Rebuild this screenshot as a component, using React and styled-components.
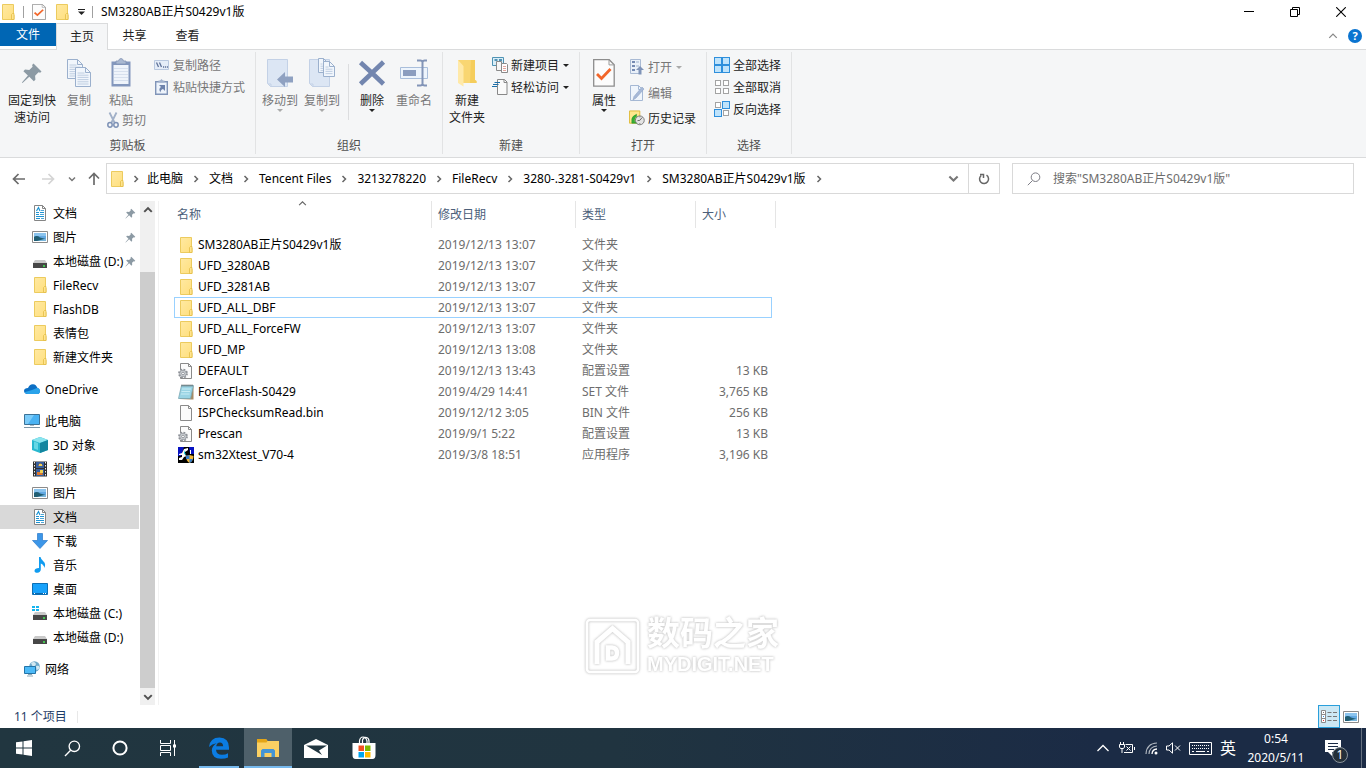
import React from "react";
import styled, { createGlobalStyle, css } from "styled-components";

const GlobalStyle = createGlobalStyle`
  *, *::before, *::after { box-sizing: border-box; }
  html, body { margin: 0; padding: 0; }
  body {
    background: #fff;
    color: #000;
    font-family: "Noto Sans", "Noto Sans CJK SC", sans-serif;
    font-size: 12px;
    line-height: 17px;
    overflow: hidden;
  }
  button, input {
    font: inherit;
    color: inherit;
    margin: 0;
    padding: 0;
    border: 0;
    background: transparent;
  }
  svg { display: block; flex: none; }
`;

/* ---------- drawings ---------- */

const Folder = () => (
  <svg width="16" height="16" viewBox="0 0 16 16">
    <defs>
      <linearGradient id="fold" x1="0" y1="0" x2="1" y2="1">
        <stop offset="0" stopColor="#ffe9a2" />
        <stop offset="1" stopColor="#ffdf7d" />
      </linearGradient>
    </defs>
    <path d="M2.5.5h11v10.500l.5.5v4h-11.500z" fill="url(#fold)" stroke="#eccb5e" />
    <path d="M11.500 15.500v-5l1-1h1.500v6z" fill="#ffe48f" stroke="#e3bd45" strokeWidth=".8" />
  </svg>
);

const CheckDoc = ({ w = 14, h = 16 }) => (
  <svg width={w} height={h} viewBox="0 0 22 28" preserveAspectRatio="none">
    <path d="M.7.7h15.500l5 5v21.500H.7z" fill="#fcfcfc" stroke="#8d8d8d" strokeWidth="1.300" />
    <path d="M16 .7v5.200h5.200" fill="none" stroke="#9a9a9a" />
    <path d="M4 15l4.500 4.500L17.500 10" fill="none" stroke="#f2662a" strokeWidth="2.800" />
  </svg>
);

const Down = ({ color = "#222" }) => (
  <svg width="6" height="3" viewBox="0 0 6 3"><path d="M0 0h6L3 3z" fill={color} /></svg>
);

const Chevron = ({ dir = "down", color = "#666", size = 8, weight = 1.5 }) => {
  const d = {
    down: "M1 2.500l3 3 3-3",
    up: "M1 5.500l3-3 3 3",
    right: "M2.500 1l3 3-3 3",
  }[dir];
  return (
    <svg width={size} height={size} viewBox="0 0 8 8">
      <path d={d} fill="none" stroke={color} strokeWidth={weight} />
    </svg>
  );
};

const Pin = ({ size = 22 }) => (
  <svg width={size} height={size} viewBox="0 0 22 22">
    <path d="M12.500 1.500l8 8-1.300 1.300-1.700-.5-3.400 3.400.3 4-1.600 1.600-4.500-4.600L1.500 21 .9 20.400l6-6.900-4.500-4.300L4 7.600l4.300.4L11.600 4.700l-.5-1.800z" fill="#8c9aa4" />
  </svg>
);

const Page = ({ x, y, w, h, lines = 6 }) => (
  <g>
    <path d={`M${x} ${y}h${w - 5}l5 5v${h - 5}h-${w}z`} fill="#f1f6fc" stroke="#9bb0cd" />
    <path d={`M${x + w - 5} ${y}v5h5`} fill="none" stroke="#9bb0cd" />
    {Array.from({ length: lines }, (_, i) => (
      <path key={i} d={`M${x + 2} ${y + 5.5 + i * 2.2}h${w - (i < 1 ? 8 : 4)}`} stroke="#b9c8de" strokeWidth=".9" />
    ))}
  </g>
);

const CopyPages = () => (
  <svg width="26" height="30" viewBox="0 0 26 30">
    <Page x={1.5} y={1.5} w={15} h={19} />
    <Page x={9.5} y={9.5} w={15} h={19} />
  </svg>
);

const Clipboard = () => (
  <svg width="20" height="30" viewBox="0 0 20 30">
    <path d="M.5 3.500h19v25h-19z" fill="#8397bd" />
    <path d="M2.500 7h15v19h-15z" fill="#eff4fb" />
    <path d="M5 5V3h2.500Q8 .5 10 .5T12.500 3H15v3H5z" fill="#aab9d2" stroke="#8193b4" strokeWidth=".8" />
    <path d="M3 10.500h14M3 13.500h14M3 16.500h14M3 19.500h14M3 22.500h14" stroke="#d7e0ee" />
  </svg>
);

const Scissors = () => (
  <svg width="12" height="16" viewBox="0 0 12 16" fill="none">
    <path d="M2.500 0.500l5 10M9.500 .5l-5 10" stroke="#a1b0c8" strokeWidth="1.800" />
    <ellipse cx="3" cy="12.800" rx="2.200" ry="2.400" stroke="#7e92b6" strokeWidth="1.500" />
    <ellipse cx="9" cy="12.800" rx="2.200" ry="2.400" stroke="#7e92b6" strokeWidth="1.500" />
  </svg>
);

const PathIcon = () => (
  <svg width="16" height="16" viewBox="0 0 16 16">
    <path d="M.5 3.500h14v9H.5z" fill="#e5edf8" stroke="#b9c8df" />
    <path d="M2.500 5.500l2 4.500M5.500 5.500l2 4.500" stroke="#5f7299" strokeWidth="1.300" />
    <path d="M9 10h1.200M11 10h1.200M13 10h1" stroke="#5f7299" strokeWidth="1.300" />
  </svg>
);

const ShortcutIcon = () => (
  <svg width="16" height="16" viewBox="0 0 16 16">
    <path d="M1.700 2.700h11.600v12.600H1.700z" fill="#edf3fb" stroke="#8094b8" strokeWidth="1.400" />
    <path d="M4.500 3.500v-2h1.500L7.500 0 9 1.500h1.500v2z" fill="#a3b3ce" />
    <path d="M5 6h6v6L9 10q-2.500.5-2.500 3.500-2.500-3.500.5-5.500z" fill="#6e83ac" />
  </svg>
);

const BookBase = () => (
  <path d="M1.500 1.500h20v27H4.500l-3-3z" fill="#dce6f4" stroke="#c3d1e6" />
);

const MoveTo = () => (
  <svg width="28" height="30" viewBox="0 0 28 30">
    <BookBase />
    <path d="M2 26h3v3" fill="none" stroke="#c3d1e6" />
    <path d="M11 21.500l8-7.500v4.500h8v6h-8V29z" fill="#8fa1c1" />
  </svg>
);

const CopyTo = () => (
  <svg width="28" height="30" viewBox="0 0 28 30">
    <BookBase />
    <path d="M2 26h3v3" fill="none" stroke="#c3d1e6" />
    <Page x={10.5} y={.5} w={10} h={14} lines={4} />
    <Page x={15.5} y={3.5} w={11} h={15} lines={4} />
  </svg>
);

const DeleteX = () => (
  <svg width="28" height="28" viewBox="0 0 28 28">
    <path d="M2.500 3.500L14 14 25.500 25M25.500 3L14 14 2.500 25" fill="none" stroke="#7386af" strokeWidth="4.600" />
  </svg>
);

const Rename = () => (
  <svg width="30" height="30" viewBox="0 0 30 30">
    <path d="M1.500 9.500h27v11h-27z" fill="#edf4fc" stroke="#a9bedb" />
    <path d="M4 12h13v6H4z" fill="#8b9dbf" />
    <path d="M18 2.500h3.500q1.500 0 2 1.500v22q-.5 1.500-2 1.500H18M28 2.500h-2.500q-1.500 0-2 1.500v22q.5 1.500 2 1.500H28" fill="none" stroke="#8294b7" strokeWidth="2" />
  </svg>
);

const BigFolder = () => (
  <svg width="20" height="28" viewBox="0 0 20 28">
    <path d="M1 1h17v20l1.500 1v2H6z" fill="#f9d672" />
    <path d="M1 1l5.500 6v20.500L1 24z" fill="#ffe9a8" />
    <path d="M14 1h4v20l1.500 1v2H13z" fill="#f5cd5c" />
  </svg>
);

const NewItem = () => (
  <svg width="16" height="16" viewBox="0 0 16 16">
    <path d="M.5.500h11v8H.500z" fill="#d9eef8" stroke="#4f93b4" />
    <path d="M2.500 3h3M7 3h3" stroke="#25759f" strokeWidth="1.500" />
    <path d="M4.500 4.500h5v9h-5z" fill="#f7f7f7" stroke="#8a8a8a" />
    <path d="M9.500 6.500h5l1 1v8h-6z" fill="#fff" stroke="#8a8a8a" />
    <path d="M11 9.500h3M11 11.500h3M11 13.500h3" stroke="#e19b93" strokeWidth=".9" />
  </svg>
);

const EasyAccess = () => (
  <svg width="16" height="16" viewBox="0 0 16 16">
    <path d="M5.500 .500h7l2.500 2.500v12.500H5.500z" fill="#fafafa" stroke="#888" />
    <path d="M12 .500v3h3" fill="none" stroke="#888" />
    <path d="M2.500 3.500H8M1 5.500h5.500M0 7.500h5" stroke="#1d6fa8" strokeWidth="1.200" />
  </svg>
);

const OpenIcon = () => (
  <svg width="16" height="16" viewBox="0 0 16 16">
    <path d="M1.500 .500h10v14h-10z" fill="#e9f0f9" stroke="#a9bad4" />
    <path d="M3 3h3M3 7h3M3 11h3" stroke="#7389b2" strokeWidth="2" />
    <path d="M7 3h3M7 7h3" stroke="#b7c6dd" strokeWidth="1.500" />
    <path d="M11 7l4 4h-2.500v4.500h-3V11H7z" fill="#7f93b8" />
  </svg>
);

const EditIcon = () => (
  <svg width="16" height="16" viewBox="0 0 16 16">
    <path d="M1.500 .500h8l4 4v11h-12z" fill="#eff5fc" stroke="#a5b8d4" />
    <path d="M9.500 .500v4h4" fill="none" stroke="#a5b8d4" />
    <path d="M4 15l1-3.500 8-9.500 2 2-8 9z" fill="#a6b9d8" stroke="#8fa3c4" strokeWidth=".6" />
  </svg>
);

const HistoryIcon = () => (
  <svg width="16" height="16" viewBox="0 0 17 16">
    <path d="M.5.500h11v13H.500z" fill="#ffe88d" stroke="#dfba37" />
    <circle cx="11.500" cy="10.500" r="4.700" fill="#e4e4e4" stroke="#777" />
    <path d="M11.500 10.500l2.500-3M11.500 10.500l-2.500.3M11.500 13.500v.8M11.500 6.500v.8" stroke="#555" strokeWidth=".9" />
    <path d="M8 4v2.500Q5.500 8 6 12l2 1.500H3V9q.5-3 5-5z" fill="#35b034" stroke="#1f8c28" strokeWidth=".5" />
  </svg>
);

const selectBoxes = [[0.5, 0.5], [8.5, 0.5], [0.5, 8.5], [8.5, 8.5]];
const SelectIcon = ({ on }) => (
  <svg width="16" height="16" viewBox="0 0 16 16">
    {selectBoxes.map(([x, y], i) =>
      on.includes(i) ? (
        <rect key={i} x={x} y={y} width="7" height="7" fill="#bfe3fb" stroke="#2e8fdc" />
      ) : (
        <rect key={i} x={x + 1} y={y + 1} width="5" height="5" fill="#fff" stroke="#a3a3a3" />
      )
    )}
  </svg>
);

const DocIcon = () => (
  <svg width="16" height="16" viewBox="0 0 16 16">
    <path d="M2.500 .500h8l3 3v12h-11z" fill="#fff" stroke="#858585" />
    <path d="M10.500 .500v3h3" fill="none" stroke="#858585" />
    <path d="M4.500 6L6.500 2.500 8 6M4 7.500h3M8 7.500h4M4 9.500h3M4 11.500h8M4 13.500h4" fill="none" stroke="#1f94d2" strokeWidth="1.200" />
    <path d="M9 5.500h3M8 9.500h4M9 13.500h3" stroke="#4fa6d6" strokeWidth="1.200" />
  </svg>
);

const PictureIcon = () => (
  <svg width="16" height="16" viewBox="0 0 16 16">
    <path d="M.500 2.500h15v11H.500z" fill="#fff" stroke="#8b8b8b" />
    <path d="M2 4h12v8H2z" fill="#63a9e3" />
    <path d="M2 4h12v3H2z" fill="#8bc4ee" />
    <path d="M2 8q3-2 6 .5l6 1.500v2H2z" fill="#215e73" />
    <path d="M5 12l9-2.500V12z" fill="#79b6dc" />
  </svg>
);

const DriveIcon = ({ windows }) => (
  <svg width="16" height="16" viewBox="0 0 16 16">
    {windows && <path d="M0 1h3v2H0zM4 1h3v2H4zM0 4h3v2H0zM4 4h3v2H4z" fill="#16b5ef" />}
    <path d="M3 7h10l2 3H1z" fill="#c9c9c9" />
    <path d="M1 10h14v5H1z" fill="#474747" />
    <path d="M11 13h2" stroke="#42ec53" strokeWidth="1.300" />
  </svg>
);

const OneDrive = () => (
  <svg width="16" height="16" viewBox="0 0 16 16">
    <path d="M4 7Q5.500 3 9 3.200q3.300.3 4.300 3.600Q16 7.500 16 10.200 15.800 13 13 13H3.500Q0 12.800 0 9.700 .3 7 4 7z" fill="#0d6fc4" />
    <path d="M8 9l5.500-2.200Q16 7.500 16 10.200 15.800 13 13 13H3.500q-2 0-3-1.800z" fill="#2aa3ea" />
  </svg>
);

const ComputerIcon = () => (
  <svg width="16" height="16" viewBox="0 0 16 16">
    <path d="M.500 1.500h15v10H.500z" fill="#49b2f3" stroke="#3b7297" />
    <path d="M1 2h9L4 11H1z" fill="#7bcbf9" />
    <path d="M6 12h4v1H6z" fill="#a9bac5" /><path d="M0 14.500h16" stroke="#7d96a7" />
  </svg>
);

const CubeIcon = () => (
  <svg width="16" height="16" viewBox="0 0 16 16">
    <path d="M8 0l8 3v10l-8 3-8-3V3z" fill="#29b8cf" />
    <path d="M8 0l8 3-8 3-8-3z" fill="#8be4ee" /><path d="M8 6l8-3v10l-8 3z" fill="#13859f" />
    <path d="M2 4.500l4 1.500v7L2 11.500z" fill="#66d7e5" />
  </svg>
);

const VideoIcon = () => (
  <svg width="16" height="16" viewBox="0 0 16 16">
    <path d="M1 .500h14v15H1z" fill="#303030" />
    <path d="M2.500 1v15M13.500 1v15" stroke="#eee" strokeDasharray="1.500 1.500" />
    <path d="M4 1h8v6H4zM4 8h8v7H4z" fill="#385f9d" />
    <path d="M6 5l2-3 3 3zM5 11h5l1 3H5z" fill="#e0792c" /><path d="M7 3h3v2H7zM8 9h3v3H8z" fill="#edd257" />
  </svg>
);

const DownloadIcon = () => (
  <svg width="16" height="16" viewBox="0 0 16 16">
    <path d="M5.500.5h5v7h5L8 15.500.5 7.500h5z" fill="#3c96e8" stroke="#2a79c8" strokeWidth=".7" />
  </svg>
);

const MusicIcon = () => (
  <svg width="16" height="16" viewBox="0 0 16 16">
    <path d="M7 0h1.500q.5 2.500 3 4.500 2.800 2.500.8 6.500-.2-3-3.500-4.500v6q-.2 3-3.500 3.300-2.800 0-2.800-2 .4-2.700 4.500-2.700z" fill="#109cf0" />
  </svg>
);

const DesktopIcon = () => (
  <svg width="16" height="16" viewBox="0 0 16 16">
    <path d="M.500 2.500h15v11H.500z" fill="#18a2fb" stroke="#0c6fb5" />
    <path d="M1 12.500h14" stroke="#0b68ab" /><path d="M2 12.500h1M11 12.500h1M13 12.500h1" stroke="#fff" />
  </svg>
);

const NetworkIcon = () => (
  <svg width="16" height="16" viewBox="0 0 16 16">
    <circle cx="10.500" cy="5.500" r="5.300" fill="#6fa9c9" />
    <path d="M7 2q3-2 4.500 0T9 6zM12 5q3-1 3.500 1T12.500 9z" fill="#d3e8f1" />
    <path d="M.500 5.500h11v7H.500z" fill="#4dbaf7" stroke="#2374a8" />
    <path d="M4 13.500h4M3 15h6" stroke="#8faab8" />
  </svg>
);

const BlankFile = () => (
  <svg width="16" height="16" viewBox="0 0 16 16">
    <path d="M2.500 .500h8l3 3v12h-11z" fill="#fbfbfb" stroke="#8a8a8a" />
    <path d="M10.500 .500v3h3" fill="none" stroke="#8a8a8a" />
  </svg>
);

const GearFile = () => (
  <svg width="16" height="16" viewBox="0 0 16 16">
    <path d="M3 .500h7.500l3 3v12H2.500V.500z" fill="#fbfbfb" stroke="#8a8a8a" />
    <path d="M10.500 .500v3h3" fill="none" stroke="#8a8a8a" />
    <circle cx="5" cy="10.500" r="4" fill="#e1e3e6" stroke="#8d9197" strokeWidth="1.800" strokeDasharray="1.800 1.340" />
    <circle cx="5" cy="10.500" r="3.200" fill="#d4d8dc" stroke="#8d9197" strokeWidth=".7" />
    <circle cx="5" cy="10.500" r="1.400" fill="#fff" stroke="#8d9197" />
  </svg>
);

const NotepadFile = () => (
  <svg width="16" height="16" viewBox="0 0 16 16">
    <path d="M4 2h11.500v13.500H13L1.500 15z" fill="#a58c66" />
    <path d="M3.500 1.500h12L12.500 14.500H.500z" fill="#9ad4e4" stroke="#7aa7b4" strokeWidth=".8" />
    <path d="M4 5h9M3.500 7.500H12M3 10h8.500" stroke="#c8ecf4" />
    <path d="M4 .500v2M6 .500v2M8 .500v2M10 .500v2M12 .500v2M14 .500v2" stroke="#555" strokeWidth=".9" />
  </svg>
);

const AppFile = () => (
  <svg width="16" height="16" viewBox="0 0 16 16">
    <path d="M0 0h16v16H0z" fill="#000" /><path d="M0 0h6L3 9H0zM11 0h5v7h-4z" fill="#0712c2" />
    <path d="M6 2l4-1v2L7 5v3l2 1-3 1-2 3H1v-2l3-1V8H1V7l3-1z" fill="#fff" />
    <path d="M12 3h1v4h-1z" fill="#fff" />
    <path d="M6 3l2 5-2-1z" fill="#2bd2dd" />
    <path d="M8 9l3.500-1L15.500 9q0 5-4 7-3.500-2-3.500-7z" fill="#f3b736" />
    <path d="M11.500 8v4H8Q7.800 10.500 8 9zM11.500 12h3.500q-1 3-3.500 4z" fill="#377ec7" />
  </svg>
);

const Magnifier = ({ size = 14, color = "#7d7d85", width = 1 }) => (
  <svg width={size} height={size} viewBox="0 0 14 14">
    <circle cx="8.500" cy="5.200" r="4.300" fill="none" stroke={color} strokeWidth={width} />
    <path d="M5.500 8.500L.800 13.200" stroke={color} strokeWidth={width} />
  </svg>
);

const NavArrow = ({ dir = 0, color = "#6b6b6b" }) => (
  <svg width="14" height="14" viewBox="0 0 14 14">
    <path transform={`rotate(${dir} 7 7)`} d="M13 7H1.500M6.500 2l-5 5 5 5" fill="none" stroke={color} strokeWidth="1.700" />
  </svg>
);

/* ---------- window chrome ---------- */

const Screen = styled.div`
  display: flex;
  flex-direction: column;
  height: 100vh;
`;

const TitleBar = styled.header`
  display: flex;
  align-items: center;
  height: 23px;
`;

const QuickTools = styled.div`
  display: flex;
  align-items: center;
  gap: 7px;
  margin-right: 8px;
`;

const Rule = styled.span`
  width: 1px;
  height: 12px;
  background: #a0a0a0;
`;

const IconButton = styled.button`
  display: flex;
  align-items: center;
  justify-content: center;
  width: ${(p) => p.$w || 16}px;
  height: ${(p) => p.$h || 16}px;
  flex: none;
`;

const Title = styled.h1`
  flex: 1;
  margin: 0;
  font-size: 12px;
  font-weight: 400;
`;

const WindowButtons = styled.div`
  display: flex;
  padding-right: 2px;
`;

const TabBar = styled.nav`
  display: flex;
  align-items: flex-start;
  height: 27px;
  border-bottom: 1px solid #dadbdc;
`;

const Tab = styled.button`
  width: 53px;
  height: 25px;
  color: #222;
  ${(p) => p.$kind === "file" && css`
    width: 56px;
    height: 23px;
    background: #0066b4;
    color: #fff;
  `}
  ${(p) => p.$kind === "active" && css`
    width: 52px;
    height: 27px;
    padding-bottom: 2px;
    background: #f5f6f7;
    border: 1px solid #dadbdc;
    border-bottom: 0;
  `}
`;

const TabTools = styled.div`
  display: flex;
  align-items: center;
  gap: 10px;
  height: 26px;
  margin-left: auto;
  padding-right: 4px;
`;

const HelpButton = styled.button`
  width: 14px;
  height: 14px;
  border-radius: 50%;
  background: #0a74d0;
  color: #fff;
  font-weight: 700;
  font-size: 11px;
  line-height: 14px;
`;

/* ---------- ribbon ---------- */

const RibbonBar = styled.section`
  display: flex;
  height: 108px;
  background: #f5f6f7;
  border-bottom: 1px solid #dadbdc;
`;

const Group = styled.div`
  display: flex;
  flex-direction: column;
  width: ${(p) => p.$w}px;
  margin: 2px 0 3px;
  padding-top: 2px;
  border-right: 1px solid #e2e3e4;
`;

const GroupBody = styled.div`
  display: flex;
  flex: 1;
  padding-left: ${(p) => p.$pad || 0}px;
`;

const GroupName = styled.div`
  height: 17px;
  color: #505050;
  text-align: center;
`;

const Stack = styled.div`
  display: flex;
  flex-direction: column;
  width: ${(p) => (p.$w ? `${p.$w}px` : "auto")};
  padding-left: ${(p) => p.$pad || 0}px;
`;

const LargeButton = styled.button`
  display: flex;
  flex-direction: column;
  align-items: center;
  width: ${(p) => p.$w || 42}px;
  margin-top: 3px;
  align-self: flex-start;
  color: ${(p) => (p.$off ? "#777" : "#222")};
  white-space: pre-line;
`;

const LargeIcon = styled.span`
  display: flex;
  align-items: center;
  height: 32px;
  margin-bottom: 3px;
`;

const SmallButton = styled.button`
  display: flex;
  align-items: center;
  gap: 3px;
  height: ${(p) => p.$h || 22}px;
  color: ${(p) => (p.$off ? "#777" : "#222")};
  white-space: nowrap;

  & > svg:last-child:not(:first-child) { margin-left: 1px; }
`;

const ButtonRule = styled.span`
  width: 1px;
  height: 56px;
  margin: 10px 2px 0 5px;
  background: #dcdddf;
`;

const Large = ({ icon, label, off, w, menu }) => (
  <LargeButton $off={off} $w={w}>
    <LargeIcon>{icon}</LargeIcon>
    {label}
    {menu && <Down color={off ? "#aaa" : "#222"} />}
  </LargeButton>
);

const Small = ({ icon, label, off, h, menu }) => (
  <SmallButton $off={off} $h={h}>
    {icon}
    <span>{label}</span>
    {menu && <Down color={off ? "#aaa" : "#222"} />}
  </SmallButton>
);

const Ribbon = () => (
  <RibbonBar>
    <Group $w={256}>
      <GroupBody>
        <Large icon={<Pin />} label={"固定到快\n速访问"} w={64} />
        <Large icon={<CopyPages />} label="复制" off w={30} />
        <Stack $w={56}>
          <Large icon={<Clipboard />} label="粘贴" off w={54} />
          <Stack $pad={13}><Small icon={<Scissors />} label="剪切" off /></Stack>
        </Stack>
        <Stack $pad={4}>
          <Small icon={<PathIcon />} label="复制路径" off />
          <Small icon={<ShortcutIcon />} label="粘贴快捷方式" off />
        </Stack>
      </GroupBody>
      <GroupName>剪贴板</GroupName>
    </Group>
    <Group $w={187}>
      <GroupBody $pad={3}>
        <Large icon={<MoveTo />} label="移动到" off menu />
        <Large icon={<CopyTo />} label="复制到" off menu />
        <ButtonRule />
        <Large icon={<DeleteX />} label="删除" menu />
        <Large icon={<Rename />} label="重命名" off />
      </GroupBody>
      <GroupName>组织</GroupName>
    </Group>
    <Group $w={137}>
      <GroupBody $pad={3}>
        <Large icon={<BigFolder />} label={"新建\n文件夹"} />
        <Stack $pad={4}>
          <Small icon={<NewItem />} label="新建项目" menu />
          <Small icon={<EasyAccess />} label="轻松访问" menu />
        </Stack>
      </GroupBody>
      <GroupName>新建</GroupName>
    </Group>
    <Group $w={127}>
      <GroupBody $pad={3}>
        <Large icon={<CheckDoc w={22} h={28} />} label="属性" menu />
        <Stack $pad={4}>
          <Small icon={<OpenIcon />} label="打开" off menu h={26} />
          <Small icon={<EditIcon />} label="编辑" off h={26} />
          <Small icon={<HistoryIcon />} label="历史记录" h={24} />
        </Stack>
      </GroupBody>
      <GroupName>打开</GroupName>
    </Group>
    <Group $w={85}>
      <GroupBody $pad={7}>
        <Stack>
          <Small icon={<SelectIcon on={[0, 1, 2, 3]} />} label="全部选择" />
          <Small icon={<SelectIcon on={[]} />} label="全部取消" />
          <Small icon={<SelectIcon on={[1, 2]} />} label="反向选择" />
        </Stack>
      </GroupBody>
      <GroupName>选择</GroupName>
    </Group>
  </RibbonBar>
);

/* ---------- address bar ---------- */

const AddressRow = styled.div`
  display: flex;
  align-items: center;
  height: 43px;
  padding: 0 12px 2px 4px;
`;

const AddressBox = styled.div`
  display: flex;
  align-items: center;
  flex: 1;
  height: 31px;
  margin-right: 12px;
  padding-left: 2px;
  border: 1px solid #d9d9d9;
`;

const Crumb = styled.button`
  white-space: nowrap;
`;

const CrumbArrow = styled.span`
  display: flex;
  justify-content: center;
  width: ${(p) => (p.$first ? 22 : 26)}px;
`;

const AddressTools = styled.div`
  display: flex;
  align-items: center;
  height: 100%;
  margin-left: auto;

  & > button:last-child { border-left: 1px solid #d9d9d9; }
`;

const SearchBox = styled.label`
  display: flex;
  align-items: center;
  gap: 12px;
  flex: 0 1 342px;
  height: 31px;
  padding-left: 14px;
  border: 1px solid #d9d9d9;
`;

const SearchInput = styled.input`
  flex: 1;
  min-width: 0;
  outline: 0;
  &::placeholder { color: #6d6d6d; opacity: 1; }
`;

const crumbs = ["此电脑", "文档", "Tencent Files", "3213278220", "FileRecv", "3280-.3281-S0429v1", "SM3280AB正片S0429v1版"];

const AddressBar = () => (
  <AddressRow>
    <IconButton $w={30} aria-label="后退"><NavArrow /></IconButton>
    <IconButton $w={28} aria-label="前进"><NavArrow dir={180} color="#d4d4d4" /></IconButton>
    <IconButton $w={20} aria-label="最近位置"><Chevron color="#777" /></IconButton>
    <IconButton $w={24} aria-label="上移"><NavArrow dir={90} /></IconButton>
    <AddressBox>
      <Folder />
      <CrumbArrow $first><Chevron dir="right" /></CrumbArrow>
      {crumbs.map((c) => (
        <React.Fragment key={c}>
          <Crumb>{c}</Crumb>
          <CrumbArrow><Chevron dir="right" /></CrumbArrow>
        </React.Fragment>
      ))}
      <AddressTools>
        <IconButton $w={29} $h={29} aria-label="展开"><Chevron size={11} color="#777" /></IconButton>
        <IconButton $w={31} $h={29} aria-label="刷新">
          <svg width="12" height="12" viewBox="0 0 12 12">
            <path d="M8.500 2.200A4.500 4.500 0 1 1 3.200 2.500M2 1.500h3.500v3.500" fill="none" stroke="#666" strokeWidth="1.500" />
          </svg>
        </IconButton>
      </AddressTools>
    </AddressBox>
    <SearchBox>
      <Magnifier />
      <SearchInput aria-label="搜索" placeholder={'搜索"SM3280AB正片S0429v1版"'} />
    </SearchBox>
  </AddressRow>
);

/* ---------- navigation pane ---------- */

const Body = styled.div`
  display: flex;
  flex: 1;
  min-height: 0;
`;

const NavPane = styled.nav`
  width: 139px;
  overflow: hidden;
`;

const NavRow = styled.a`
  display: flex;
  align-items: center;
  height: 24px;
  margin-top: ${(p) => (p.$root ? 8 : 0)}px;
  padding: 0 3px 0 ${(p) => (p.$level === 1 ? 32 : 24)}px;
  background: ${(p) => (p.$on ? "#d9d9d9" : "transparent")};
  color: #000;
  text-decoration: none;
  white-space: nowrap;
`;

const NavText = styled.span`
  flex: 1;
  margin-left: 5px;
`;

const navItems = [
  { icon: <DocIcon />, name: "文档", level: 1, pin: true },
  { icon: <PictureIcon />, name: "图片", level: 1, pin: true },
  { icon: <DriveIcon />, name: "本地磁盘 (D:)", level: 1, pin: true },
  { icon: <Folder />, name: "FileRecv", level: 1 },
  { icon: <Folder />, name: "FlashDB", level: 1 },
  { icon: <Folder />, name: "表情包", level: 1 },
  { icon: <Folder />, name: "新建文件夹", level: 1 },
  { icon: <OneDrive />, name: "OneDrive", root: true },
  { icon: <ComputerIcon />, name: "此电脑", root: true },
  { icon: <CubeIcon />, name: "3D 对象", level: 1 },
  { icon: <VideoIcon />, name: "视频", level: 1 },
  { icon: <PictureIcon />, name: "图片", level: 1 },
  { icon: <DocIcon />, name: "文档", level: 1, on: true },
  { icon: <DownloadIcon />, name: "下载", level: 1 },
  { icon: <MusicIcon />, name: "音乐", level: 1 },
  { icon: <DesktopIcon />, name: "桌面", level: 1 },
  { icon: <DriveIcon windows />, name: "本地磁盘 (C:)", level: 1 },
  { icon: <DriveIcon />, name: "本地磁盘 (D:)", level: 1 },
  { icon: <NetworkIcon />, name: "网络", root: true },
];

const ScrollBar = styled.div`
  display: flex;
  flex-direction: column;
  width: 15px;
  margin: 0 3px 0 1px;
  background: #f0f0f0;
`;

const ScrollTrack = styled.div`
  display: flex;
  flex: 1;
  padding-top: 54px;
`;

const ScrollThumb = styled.div`
  flex: 1;
  background: #cdcdcd;
`;

/* ---------- file list ---------- */

const ListPane = styled.main`
  position: relative;
  flex: 1;
  padding-left: 15px;
  border-left: 1px solid #f2f2f2;
`;

const FileTable = styled.table`
  width: 598px;
  table-layout: fixed;
  border-collapse: collapse;
`;

const HeadCell = styled.th`
  width: ${(p) => p.$w}px;
  height: 33px;
  padding: 0 0 6px;
  font-weight: 400;
  text-align: left;
  color: #4c607a;
`;

const HeadLabel = styled.div`
  position: relative;
  width: ${(p) => (p.$last ? 80 : p.$w)}px;
  height: 27px;
  padding-left: ${(p) => (p.$first ? 3 : 6)}px;
  border-right: 1px solid #e5e5e5;
  line-height: 27px;
`;

const SortMark = styled.span`
  position: absolute;
  top: -2px;
  right: 0;
  left: 0;
  display: flex;
  justify-content: center;
`;

const FileRow = styled.tr`
  height: 21px;
  outline: ${(p) => (p.$focus ? "1px solid #99d1ff" : "none")};
  outline-offset: -1px;
`;

const Cell = styled.td`
  padding: 0 ${(p) => (p.$end ? 4 : 0)}px 0 6px;
  color: #6d6d6d;
  text-align: ${(p) => (p.$end ? "right" : "left")};
  white-space: nowrap;
`;

const NameCell = styled(Cell)`
  padding-left: 4px;
  color: #000;
`;

const FileName = styled.div`
  display: flex;
  align-items: center;
  gap: 4px;
`;

const files = [
  [<Folder />, "SM3280AB正片S0429v1版", "2019/12/13 13:07", "文件夹", ""],
  [<Folder />, "UFD_3280AB", "2019/12/13 13:07", "文件夹", ""],
  [<Folder />, "UFD_3281AB", "2019/12/13 13:07", "文件夹", ""],
  [<Folder />, "UFD_ALL_DBF", "2019/12/13 13:07", "文件夹", ""],
  [<Folder />, "UFD_ALL_ForceFW", "2019/12/13 13:07", "文件夹", ""],
  [<Folder />, "UFD_MP", "2019/12/13 13:08", "文件夹", ""],
  [<GearFile />, "DEFAULT", "2019/12/13 13:43", "配置设置", "13 KB"],
  [<NotepadFile />, "ForceFlash-S0429", "2019/4/29 14:41", "SET 文件", "3,765 KB"],
  [<BlankFile />, "ISPChecksumRead.bin", "2019/12/12 3:05", "BIN 文件", "256 KB"],
  [<GearFile />, "Prescan", "2019/9/1 5:22", "配置设置", "13 KB"],
  [<AppFile />, "sm32Xtest_V70-4", "2019/3/8 18:51", "应用程序", "3,196 KB"],
];

const columns = [["名称", 258], ["修改日期", 144], ["类型", 120], ["大小", 76]];

const Watermark = styled.div`
  position: absolute;
  left: 426px;
  bottom: 29px;
  display: flex;
  align-items: center;
  gap: 6px;
  color: #fff;
  filter: drop-shadow(0 0 1px #c8c8c8) drop-shadow(0 0 1px #e4e4e4);
  pointer-events: none;
`;

const MarkName = styled.div`
  font-family: "Liberation Sans", "Noto Sans CJK SC", sans-serif;
  font-size: 33px;
  font-weight: 700;
  line-height: 38px;
`;

const MarkSite = styled.div`
  font-family: "Liberation Sans", sans-serif;
  font-size: 20px;
  font-weight: 700;
  line-height: 23px;
`;

/* ---------- status bar ---------- */

const StatusBar = styled.footer`
  display: flex;
  align-items: center;
  height: 23px;
  padding: 0 7px 0 14px;
  color: #1e3c66;
`;

const StatusRule = styled.span`
  width: 1px;
  height: 12px;
  margin-left: 10px;
  background: #e8e8e8;
`;

const ViewButtons = styled.div`
  display: flex;
  align-items: center;
  gap: 3px;
  margin-left: auto;
`;

const ViewButton = styled.button`
  display: flex;
  align-items: center;
  justify-content: center;
  height: 23px;
  width: ${(p) => (p.$on ? 22 : 16)}px;
  background: ${(p) => (p.$on ? "#cce8f4" : "transparent")};
  border: ${(p) => (p.$on ? "1px solid #2a9fdb" : "0")};
`;

/* ---------- taskbar ---------- */

const TaskBar = styled.footer`
  display: flex;
  height: 40px;
  background: linear-gradient(90deg, #213640 0%, #203440 45%, #1b2b45 80%, #1b2b45 100%);
  color: #fff;
`;

const TaskButton = styled.button`
  display: flex;
  align-items: center;
  justify-content: center;
  width: ${(p) => (p.$running ? 40 : 48)}px;
  height: 40px;
  margin-left: ${(p) => (p.$running ? 7 : 0)}px;
  margin-right: ${(p) => (p.$running ? 5 : 0)}px;
  padding-top: ${(p) => (p.$running || p.$on ? 2 : 0)}px;
  background: ${(p) => (p.$on ? "#4e606a" : "transparent")};
  border-bottom: ${(p) => (p.$running || p.$on ? "2px solid #76b9ed" : "0")};
`;

const Tray = styled.div`
  display: flex;
  align-items: center;
  margin-left: auto;
`;

const InputMode = styled.button`
  width: 26px;
  padding-right: 4px;
  font-size: 16px;
  line-height: 24px;
`;

const Clock = styled.time`
  width: 66px;
  line-height: 19px;
  text-align: center;
`;

const NoticeButton = styled.button`
  position: relative;
  display: flex;
  justify-content: center;
  width: 48px;
  height: 17px;
`;

const NoticeBadge = styled.span`
  position: absolute;
  left: 23px;
  top: 7px;
  width: 16px;
  height: 16px;
  border: 1px solid #8b949c;
  border-radius: 50%;
  background: #24303a;
  font-size: 12px;
  line-height: 14px;
  text-align: center;
`;

const ShowDesktop = styled.button`
  width: 5px;
  height: 40px;
  margin-left: 4px;
  border-left: 1px solid #65707f;
`;

const Desktop = () => (
  <TaskBar>
    <TaskButton aria-label="开始">
      <svg width="16" height="16" viewBox="0 0 16 16"><path d="M0 2.300l6.500-.9v6H0zM7.500 1.200L16 0v7.400H7.500zM0 8.500h6.500v6L0 13.700zM7.500 8.500H16V16l-8.500-1.200z" fill="#fff" /></svg>
    </TaskButton>
    <TaskButton aria-label="搜索"><Magnifier size={17} color="#fff" width={1.1} /></TaskButton>
    <TaskButton aria-label="Cortana">
      <svg width="16" height="16" viewBox="0 0 16 16"><circle cx="8" cy="8" r="6.600" fill="none" stroke="#fff" strokeWidth="2" /></svg>
    </TaskButton>
    <TaskButton aria-label="任务视图">
      <svg width="16" height="16" viewBox="0 0 16 16" fill="none" stroke="#fff">
        <path d="M.5 0v3.500h10V0M.5 16v-3.500h10V16M.500 5.500h10v5H.500zM14.500 0v16" />
        <path d="M13 4.500h3v3h-3z" fill="#fff" stroke="none" />
      </svg>
    </TaskButton>
    <TaskButton $running aria-label="Edge">
      <svg width="22" height="22" viewBox="0 0 22 22">
        <path d="M1 10Q2 .500 11.500.500q9.500.5 9.500 10v2.300H8q.3 5 6 5 3.500 0 6-1.600v4.300Q17.500 21.800 13 21.800 4 21.500 3.800 13.500 3.900 9 8.500 6.300 4 6.700 1 10zM8.200 9.300h7q-.2-3.500-3.300-3.700-3.200.2-3.700 3.700z" fill="#0b7ce2" />
      </svg>
    </TaskButton>
    <TaskButton $on aria-label="文件资源管理器">
      <svg width="22" height="18" viewBox="0 0 22 18">
        <path d="M0 0h9l1.500 2H22v16H0z" fill="#fbd063" /><path d="M0 0h9l1.500 2-1 1.500H0z" fill="#e4a516" />
        <path d="M4 18v-6.500l1.500-1.500h11l1.500 1.500V18h-3.500v-4h-7v4z" fill="#4495d6" />
      </svg>
    </TaskButton>
    <TaskButton aria-label="邮件">
      <svg width="24" height="19" viewBox="0 0 24 19"><path d="M0 6L12 0l12 6v13H0z" fill="#fff" /><path d="M2 6.500h21l-8 5 3 4.500z" fill="#213640" /></svg>
    </TaskButton>
    <TaskButton aria-label="应用商店">
      <svg width="24" height="24" viewBox="0 0 24 24">
        <path d="M0.500 7h23v12q0 4-3 4h-17q-3 0-3-4z" fill="#fff" />
        <path d="M7.500 8V5Q8 1 11 1t4 4v3M10.500 7V4q1-3 4-2.500 2.500.5 2.500 4V7" fill="none" stroke="#fff" strokeWidth="1.200" />
        <path d="M6.500 9.500H12V15H6.500z" fill="#f25022" /><path d="M13 9.500h5.500V15H13z" fill="#7fba00" />
        <path d="M6.500 16H12v5.500H6.500z" fill="#00a4ef" /><path d="M13 16h5.500v5.500H13z" fill="#ffb900" />
      </svg>
    </TaskButton>
    <Tray>
      <IconButton $w={24} aria-label="显示隐藏的图标">
        <svg width="14" height="8" viewBox="0 0 14 8"><path d="M1.500 7L7 1.500 12.500 7" fill="none" stroke="#fff" strokeWidth="1.300" /></svg>
      </IconButton>
      <IconButton $w={24} aria-label="电池">
        <svg width="16" height="12" viewBox="0 0 16 12" fill="none" stroke="#fff">
          <path d="M6.500 2.500h7v8H5M15.500 5v3M7.500 4.500l4 4M11.500 4.500l-4 4" />
          <path d="M1.500 0v2.500M4.500 0v2.500M.500 2.500h5V5L4.500 6.500h-3L.500 5zM3 6.500v4.500" />
        </svg>
      </IconButton>
      <IconButton $w={24} aria-label="网络">
        <svg width="13" height="13" viewBox="0 0 13 13" fill="none">
          <path d="M1 12Q1.500 1.500 12 1M4 12q.5-7.500 8-8" stroke="#aeb5be" strokeWidth="1.200" />
          <path d="M7 12q.3-4.700 5-5" stroke="#fff" strokeWidth="1.300" /><circle cx="11" cy="11" r="1.500" fill="#fff" />
        </svg>
      </IconButton>
      <IconButton $w={20} aria-label="音量">
        <svg width="15" height="12" viewBox="0 0 15 12" fill="none" stroke="#fff">
          <path d="M.500 4h2.500L6.500.800v10.400L3 8H.500zM9 3.500l5 5M14 3.500l-5 5" />
        </svg>
      </IconButton>
      <IconButton $w={34} aria-label="键盘">
        <svg width="23" height="13" viewBox="0 0 23 13" fill="none" stroke="#fff">
          <path d="M.500.500h22v12H.500z" />
          <path d="M3 3.500h17M3 6.500h17" strokeDasharray="1 1" /><path d="M3 9.500h2M7 9.500h9M18 9.500h2" />
        </svg>
      </IconButton>
      <InputMode>英</InputMode>
      <Clock>0:54<br />2020/5/11</Clock>
      <NoticeButton aria-label="通知">
        <svg width="16" height="17" viewBox="0 0 16 17"><path d="M0 0h16v12h-9v4l-4-4H0z" fill="#fff" /><path d="M3 3.500h10M3 6.500h10M3 9.500h6" stroke="#1b2b45" /></svg>
        <NoticeBadge>1</NoticeBadge>
      </NoticeButton>
      <ShowDesktop aria-label="显示桌面" />
    </Tray>
  </TaskBar>
);

export default function App() {
  return (
    <Screen>
      <GlobalStyle />
      <TitleBar>
        <QuickTools>
          <Folder />
          <Rule />
          <IconButton aria-label="属性"><CheckDoc /></IconButton>
          <IconButton aria-label="新建文件夹"><Folder /></IconButton>
          <IconButton $w={8} aria-label="自定义快速访问工具栏">
            <svg width="7" height="6" viewBox="0 0 7 6"><path d="M0 .500h7" stroke="#222" /><path d="M0 2.500h7L3.500 6z" fill="#222" /></svg>
          </IconButton>
          <Rule />
        </QuickTools>
        <Title>SM3280AB正片S0429v1版</Title>
        <WindowButtons>
          <IconButton $w={46} $h={22} aria-label="最小化"><svg width="10" height="10" viewBox="0 0 10 10"><path d="M0 4.500h10" stroke="#000" /></svg></IconButton>
          <IconButton $w={46} $h={22} aria-label="还原"><svg width="10" height="10" viewBox="0 0 10 10"><path d="M.500 2.500h7v7h-7zM2.500 2.500v-2h7v7h-2" fill="none" stroke="#000" /></svg></IconButton>
          <IconButton $w={46} $h={22} aria-label="关闭"><svg width="10" height="10" viewBox="0 0 10 10"><path d="M.200.200l9.600 9.600M9.800.200L.200 9.800" stroke="#000" strokeWidth="1.100" /></svg></IconButton>
        </WindowButtons>
      </TitleBar>
      <TabBar>
        <Tab $kind="file">文件</Tab>
        <Tab $kind="active">主页</Tab>
        <Tab>共享</Tab>
        <Tab>查看</Tab>
        <TabTools>
          <IconButton $w={10} aria-label="折叠功能区"><Chevron dir="up" color="#888" size={10} weight={1} /></IconButton>
          <HelpButton aria-label="帮助">?</HelpButton>
        </TabTools>
      </TabBar>
      <Ribbon />
      <AddressBar />
      <Body>
        <NavPane>
          {navItems.map((n, i) => (
            <NavRow key={i} href="#" $level={n.level} $root={n.root} $on={n.on}>
              {n.icon}
              <NavText>{n.name}</NavText>
              {n.pin && <Pin size={11} />}
            </NavRow>
          ))}
        </NavPane>
        <ScrollBar>
          <IconButton $w={15} $h={17} aria-label="向上滚动"><Chevron dir="up" size={10} color="#505050" weight={1.6} /></IconButton>
          <ScrollTrack><ScrollThumb /></ScrollTrack>
          <IconButton $w={15} $h={17} aria-label="向下滚动"><Chevron size={10} color="#505050" weight={1.6} /></IconButton>
        </ScrollBar>
        <ListPane>
          <FileTable>
            <thead>
              <tr>
                {columns.map(([name, w], i) => (
                  <HeadCell key={name} $w={w}>
                    <HeadLabel $w={w} $first={i === 0} $last={i === 3}>
                      {name}
                      {i === 0 && <SortMark><Chevron dir="up" size={9} weight={1} /></SortMark>}
                    </HeadLabel>
                  </HeadCell>
                ))}
              </tr>
            </thead>
            <tbody>
              {files.map(([icon, name, date, type, size]) => (
                <FileRow key={name} $focus={name === "UFD_ALL_DBF"}>
                  <NameCell><FileName>{icon}{name}</FileName></NameCell>
                  <Cell>{date}</Cell>
                  <Cell>{type}</Cell>
                  <Cell $end>{size}</Cell>
                </FileRow>
              ))}
            </tbody>
          </FileTable>
          <Watermark>
            <svg width="56" height="58" viewBox="0 0 56 58" fill="none" stroke="#fff">
              <rect x="2" y="3" width="51" height="52" rx="3" strokeWidth="2.500" />
              <path d="M12 47V25L27.500 11.500 43 25v22" strokeWidth="5" />
              <path d="M23 30.500v11h4q5-.4 5-5.500t-5-5.500z" strokeWidth="4.500" />
            </svg>
            <div>
              <MarkName>数码之家</MarkName>
              <MarkSite>MYDIGIT.NET</MarkSite>
            </div>
          </Watermark>
        </ListPane>
      </Body>
      <StatusBar>
        11 个项目
        <StatusRule />
        <ViewButtons>
          <ViewButton $on aria-label="详细信息">
            <svg width="16" height="13" viewBox="0 0 16 13" fill="none">
              <path d="M.500.500h4v12h-4zM.500 4.500h4M.500 8.500h4" stroke="#8a8a8a" fill="#fff" />
              <path d="M6.500 2.500h4M12 2.500h4M6.500 6.500h4M12 6.500h4M6.500 10.500h4M12 10.500h4" stroke="#777" />
              <path d="M2 2.500h1" stroke="#777" /><path d="M2 6.500h1" stroke="#2f8de0" /><path d="M2 10.500h1" stroke="#d33" />
            </svg>
          </ViewButton>
          <ViewButton aria-label="大缩略图"><PictureIcon /></ViewButton>
        </ViewButtons>
      </StatusBar>
      <Desktop />
    </Screen>
  );
}
